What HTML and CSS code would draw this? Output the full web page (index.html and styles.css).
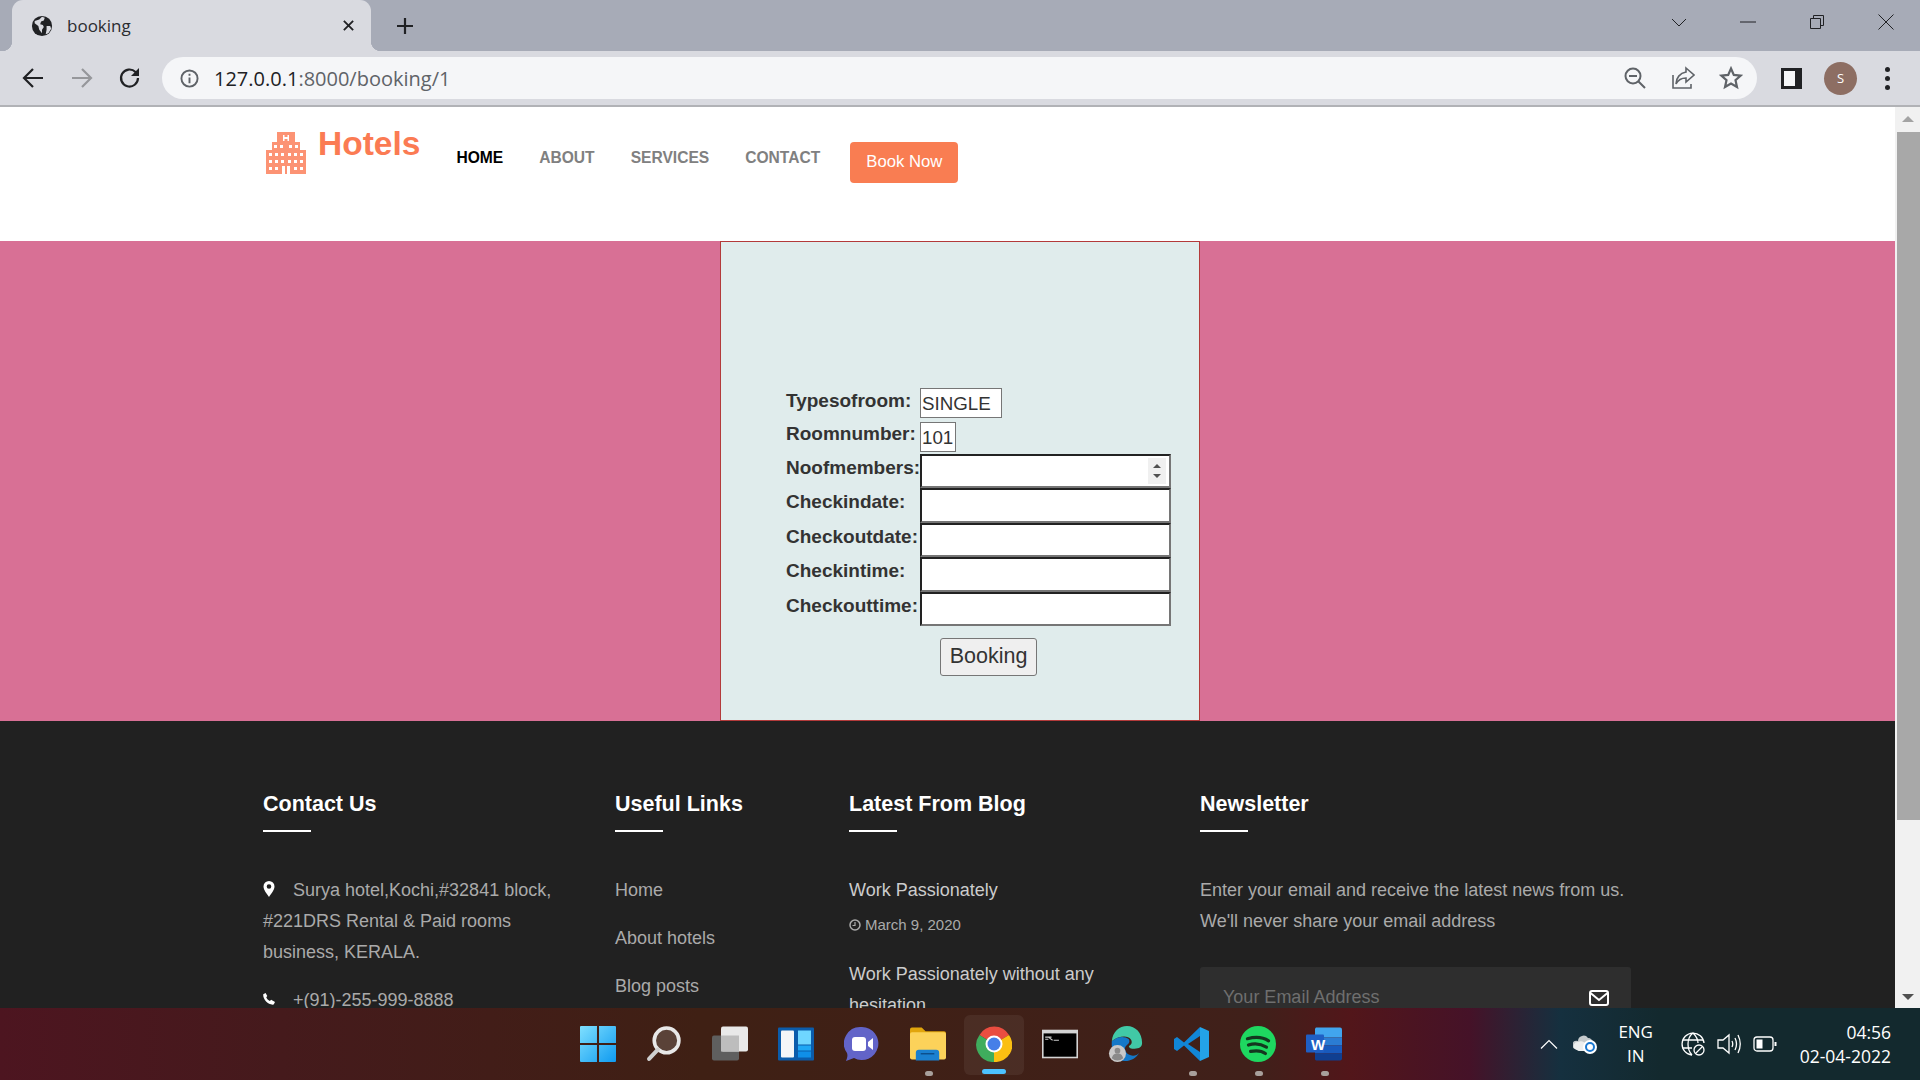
FILE: index.html
```html
<!DOCTYPE html>
<html lang="en">
<head>
  <meta charset="UTF-8">
  <title>booking</title>
  <link rel="stylesheet" href="styles.css">
</head>
<body>
  <!-- browser tab row -->
  <div class="tabstrip">
    <div class="tab">
      <svg class="favicon" viewBox="0 0 24 24"><circle cx="12" cy="12" r="11" fill="#202124"/><path d="M4 6.5 9 5l3-3 3 1-1 3-3 1-1 3 3 1 1 2-2 3v4l-3-4-1-4-4-3zM17 12h4l1 3-3 5-3 1 1-5z" fill="#d9dae0"/></svg>
      <span class="tab-title">booking</span>
      <svg class="tab-close" viewBox="0 0 14 14"><path d="M2 2l10 10M12 2 2 12" stroke="#202124" stroke-width="2"/></svg>
    </div>
    <svg class="new-tab" viewBox="0 0 18 18"><path d="M9 1v16M1 9h16" stroke="#202124" stroke-width="2.2"/></svg>
    <div class="win-controls">
      <svg viewBox="0 0 16 16"><path d="M1 5l7 7 7-7" fill="none" stroke="#202124"/></svg>
      <svg viewBox="0 0 16 16"><path d="M0 8h16" stroke="#202124"/></svg>
      <svg viewBox="0 0 16 16"><path d="M1.5 4.5h10v10h-10zM4.500 4.500v-3h10v10h-3" fill="none" stroke="#202124"/></svg>
      <svg viewBox="0 0 16 16"><path d="M.5.5l15 15M15.500.5l-15 15" stroke="#202124"/></svg>
    </div>
  </div>

  <!-- address bar -->
  <div class="toolbar">
    <svg class="tool-btn" viewBox="0 0 24 24"><path d="M22 12H4M12 3l-9 9 9 9" fill="none" stroke="#202124" stroke-width="2.200"/></svg>
    <svg class="tool-btn" viewBox="0 0 24 24"><path d="M2 12h18M12 3l9 9-9 9" fill="none" stroke="#96979b" stroke-width="2.200"/></svg>
    <svg class="tool-btn" viewBox="0 0 24 24"><path d="M20 12a8.500 8.500 0 1 1-2.500-6L20 8.500" fill="none" stroke="#202124" stroke-width="2.200"/><path d="M21 2v8h-8z" fill="#202124"/></svg>
    <div class="omnibox">
      <svg class="info-icon" viewBox="0 0 20 20"><circle cx="10" cy="10" r="8.500" fill="none" stroke="#5f6368" stroke-width="2"/><path d="M9 9h2v6H9zM9 5h2v2H9z" fill="#5f6368"/></svg>
      <span class="url"><span class="url-host">127.0.0.1</span>:8000/booking/1</span>
      <div class="omni-icons">
        <svg viewBox="0 0 24 24"><circle cx="10" cy="10" r="7.500" fill="none" stroke="#5f6368" stroke-width="2"/><path d="M6 10h8M15.500 15.500l6.500 6.500" stroke="#5f6368" stroke-width="2"/></svg>
        <svg viewBox="0 0 24 24"><path d="M2 9v13h18v-4" fill="none" stroke="#5f6368" stroke-width="1.600"/><path d="M15 2l8 7-8 7v-4c-5 0-8 2-10 6 0-6 4-11 10-12z" fill="none" stroke="#5f6368" stroke-width="1.600"/></svg>
        <svg viewBox="0 0 24 24"><path d="M12 2.500l2.800 6.400 6.900.7-5.200 4.600 1.500 6.800-6-3.500-6 3.500 1.500-6.800-5.200-4.600 6.900-.7z" fill="none" stroke="#5f6368" stroke-width="2.200"/></svg>
      </div>
    </div>
    <svg class="side-panel" viewBox="0 0 21 21"><rect width="21" height="21" fill="#202124"/><rect x="3" y="3" width="11" height="15" fill="#f5f6f8"/></svg>
    <div class="avatar">S</div>
    <div class="menu-dots"><i></i><i></i><i></i></div>
  </div>

  <div class="viewport">
    <div class="page">
      <header class="site-header">
        <svg class="logo-icon" viewBox="0 0 40 42">
          <path d="M0 18h6v-8h5V0h18v10h5v8h6v24H0z" fill="#fc9374"/>
          <path d="M17 3h1.500v2h3V3H23v6h-1.500V7h-3v2H17zM8 13h3v3H8zM14 13h3v3h-3zM23 13h3v3h-3zM29 13h3v3h-3zM3 21h3v3H3zM9 21h3v3H9zM15 21h3v3h-3zM22 21h3v3h-3zM28 21h3v3h-3zM34 21h3v3h-3zM3 28h3v3H3zM9 28h3v3H9zM15 28h3v3h-3zM22 28h3v3h-3zM28 28h3v3h-3zM34 28h3v3h-3zM3 35h3v3H3zM9 35h3v3H9zM34 35h3v3h-3zM28 35h3v3h-3zM16 34h3v8h-3zM21 34h3v8h-3z" fill="#fff"/>
        </svg>
        <a class="logo-text">Hotels</a>
        <nav class="main-nav">
          <a class="nav-link active">HOME</a>
          <a class="nav-link">ABOUT</a>
          <a class="nav-link">SERVICES</a>
          <a class="nav-link">CONTACT</a>
        </nav>
        <a class="book-btn">Book Now</a>
      </header>

      <section class="booking-band">
        <form class="booking-form">
          <div class="form-row row-type">
            <label>Typesofroom:</label>
            <span class="value-box">SINGLE</span>
          </div>
          <div class="form-row row-number">
            <label>Roomnumber:</label>
            <span class="value-box value-small">101</span>
          </div>
          <div class="form-row">
            <label>Noofmembers:</label>
            <div class="spin-wrap">
              <input type="number">
              <div class="spin-box"><i class="spin-up"></i><i class="spin-down"></i></div>
            </div>
          </div>
          <div class="form-row"><label>Checkindate:</label><input type="text"></div>
          <div class="form-row"><label>Checkoutdate:</label><input type="text"></div>
          <div class="form-row"><label>Checkintime:</label><input type="text"></div>
          <div class="form-row"><label>Checkouttime:</label><input type="text"></div>
          <button type="button" class="submit-btn">Booking</button>
        </form>
      </section>

      <footer class="site-footer">
        <div class="foot-col">
          <h3>Contact Us</h3>
          <p class="foot-text"><svg class="foot-icon pin" viewBox="0 0 12 16"><path fill-rule="evenodd" d="M6 0a5.500 5.500 0 0 1 5.500 5.500C11.500 9 8 13 6 16 4 13 .5 9 .5 5.500A5.500 5.500 0 0 1 6 0zm0 3.200a2.300 2.300 0 1 0 0 4.600 2.300 2.300 0 0 0 0-4.600z" fill="#fff"/></svg>Surya hotel,Kochi,#32841 block, #221DRS Rental &amp; Paid rooms business, KERALA.</p>
          <p class="foot-text phone"><svg class="foot-icon" viewBox="0 0 14 14"><path d="M3 0 5 3.500 3.800 5c.8 2 2.200 3.400 4.200 4.200L9.500 8 14 10.500 12.500 13.500C6 14.500-.5 7 .3 1.500z" fill="#fff"/></svg>+(91)-255-999-8888</p>
        </div>
        <div class="foot-col">
          <h3>Useful Links</h3>
          <a class="foot-link">Home</a>
          <a class="foot-link">About hotels</a>
          <a class="foot-link">Blog posts</a>
        </div>
        <div class="foot-col blog-col">
          <h3>Latest From Blog</h3>
          <a class="post-title">Work Passionately</a>
          <div class="post-date"><svg viewBox="0 0 12 12"><circle cx="6" cy="6" r="5" fill="none" stroke="#aaa" stroke-width="1.500"/><path d="M6 3v3.500H3.500" fill="none" stroke="#aaa" stroke-width="1.200"/></svg>March 9, 2020</div>
          <a class="post-title">Work Passionately without any hesitation</a>
        </div>
        <div class="foot-col">
          <h3>Newsletter</h3>
          <p class="foot-text">Enter your email and receive the latest news from us. We'll never share your email address</p>
          <div class="news-box">
            <span>Your Email Address</span>
            <svg viewBox="0 0 20 16"><rect x="1" y="1" width="18" height="14" rx="2" fill="none" stroke="#fff" stroke-width="2"/><path d="M1.500 3 10 10l8.500-7" fill="none" stroke="#fff" stroke-width="2"/></svg>
          </div>
        </div>
      </footer>
    </div>

    <div class="scrollbar">
      <div class="sb-arrow up"></div>
      <div class="sb-thumb"></div>
      <div class="sb-arrow down"></div>
    </div>
  </div>

  <!-- windows taskbar -->
  <div class="taskbar">
    <div class="task-apps">
      <div class="task-app">
        <svg viewBox="0 0 35 35"><defs><linearGradient id="winblue" x1="0" y1="0" x2="1" y2="1"><stop offset="0" stop-color="#7fe0ff"/><stop offset="1" stop-color="#0f9af0"/></linearGradient></defs><path d="M1 0h15.500v16.500H0V1a1 1 0 0 1 1-1zM18.500 0H34a1 1 0 0 1 1 1v15.500H18.500zM0 18.500h16.500V35H1a1 1 0 0 1-1-1zM18.500 18.500H35V34a1 1 0 0 1-1 1H18.500z" fill="url(#winblue)"/></svg>
      </div>
      <div class="task-app">
        <svg viewBox="0 0 35 35"><circle cx="20" cy="14" r="12" fill="#5a4238" stroke="#e8e8e8" stroke-width="3.500"/><path d="M11.500 23 3 32" stroke="#d0d0d0" stroke-width="4" stroke-linecap="round"/></svg>
      </div>
      <div class="task-app">
        <svg viewBox="0 0 36 35"><rect x="0" y="9" width="27" height="25" rx="2" fill="#5f5f5f"/><rect x="9" y="0" width="27" height="25" rx="2" fill="#e9e9e9"/><rect x="9" y="9" width="18" height="16" fill="#bdbdbd"/></svg>
      </div>
      <div class="task-app">
        <svg viewBox="0 0 36 33"><rect width="36" height="33" rx="1" fill="#0b5cab"/><rect x="3" y="3" width="13" height="27" rx="1" fill="#f4f6f8"/><rect x="20" y="3" width="13" height="14" fill="#6fd6ff"/><rect x="20" y="18" width="13" height="5" fill="#1ea7f5"/><rect x="20" y="24" width="13" height="6" fill="#0f8fe8"/></svg>
      </div>
      <div class="task-app">
        <svg viewBox="0 0 36 36"><path d="M18 1a16.500 16.500 0 1 1-8 31l-8 3c1-3 2-5 1-8A16.500 16.500 0 0 1 18 1z" fill="#6264c8"/><rect x="8" y="11" width="14" height="14" rx="3" fill="#fff"/><path d="M24 16l5-4v12l-5-4z" fill="#fff"/></svg>
      </div>
      <div class="task-app running">
        <svg viewBox="0 0 37 34"><path d="M0 2a2 2 0 0 1 2-2h10l4 4h19a2 2 0 0 1 2 2v5H0z" fill="#e2a50c"/><rect y="5" width="37" height="28" rx="2" fill="#fcd25a"/><path d="M6 33v-8a3 3 0 0 1 3-3h18a3 3 0 0 1 3 3v8z" fill="#1a80d0" transform="translate(0 1)"/><path d="M11 27h14" stroke="#0c4f8c" stroke-width="1.500"/></svg>
      </div>
      <div class="task-app chrome-app">
        <svg viewBox="0 0 36 36"><path d="M18 18 3.500 9A17 17 0 0 1 33 9z" fill="#e94235"/><path d="M18 18 33 9a17 17 0 0 1-15 27z" fill="#fbbc04"/><path d="M18 18v18A17 17 0 0 1 3.500 9z" fill="#34a853"/><circle cx="18" cy="18" r="8.500" fill="#fff"/><circle cx="18" cy="18" r="6.500" fill="#3b78e7"/></svg>
      </div>
      <div class="task-app">
        <svg viewBox="0 0 34 27"><rect width="34" height="27" fill="#d4d4d4"/><rect x="1.500" y="3.500" width="31" height="22" fill="#000"/><path d="M3 7h6M3 9h3M6 7l4 3M11 10h5" stroke="#ccc" stroke-width="1"/></svg>
      </div>
      <div class="task-app">
        <svg viewBox="0 0 36 38"><path d="M3 16C4 6 11 0 19 0c9 0 16 7 16 18 0 4-3 6-8 6-4 0-6-1-6-3 3-1 4-4 2-7-3-4-12-4-20 2z" fill="#41c9a6"/><path d="M3 16c6-5 13-6 18-2 1 2 1 4-2 6-4 3-2 9 4 11 3 1 7 0 9-3-3 6-9 9-15 9C8 37 2 27 3 16z" fill="#1478c8"/><circle cx="9" cy="29" r="9" fill="#c9c9c9"/><circle cx="9" cy="26" r="3" fill="#8a8a8a"/><path d="M3 34c1-4 3-5 6-5s5 1 6 5a9 9 0 0 1-12 0z" fill="#8a8a8a"/></svg>
      </div>
      <div class="task-app running">
        <svg viewBox="0 0 36 36"><path d="M26 1l9 4v26l-9 4z" fill="#23a3e8"/><path d="M26 1 10 16.500 3 11l-3 2v10l3 2 7-5.500L26 35v-9L14 18l12-8z" fill="#1186d6"/></svg>
      </div>
      <div class="task-app running">
        <svg viewBox="0 0 34 34"><circle cx="17" cy="17" r="17" fill="#1ed760"/><path d="M7 12c7-2 14-2 20 2M8 18c6-2 12-1 17 2M10 24c5-1 10-1 14 2" fill="none" stroke="#14361f" stroke-width="3" stroke-linecap="round"/></svg>
      </div>
      <div class="task-app running word-app">
        <svg viewBox="0 0 36 33"><path d="M10 0h24a2 2 0 0 1 2 2v8H9V1z" fill="#41a5ee"/><rect x="9" y="10" width="27" height="8" fill="#2b7cd3"/><rect x="9" y="18" width="27" height="8" fill="#185abd"/><path d="M9 26h27v5a2 2 0 0 1-2 2H10l-1-1z" fill="#103f91"/><rect y="7" width="18" height="18" rx="1" fill="#1f5fc4"/></svg>
        <span class="word-letter">W</span>
      </div>
    </div>
    <div class="tray">
      <svg class="tray-caret" viewBox="0 0 18 10"><path d="M1 9.500l8-8 8 8" fill="none" stroke="#fff" stroke-width="1.200"/></svg>
      <svg class="tray-cloud" viewBox="0 0 24 20"><path d="M2 15a4 4 0 0 1 3-8 5.500 5.500 0 0 1 10-3 5 5 0 0 1 5 5l-7 8H6z" fill="#c5cacc"/><path d="M2 15a4 4 0 0 1 3-7 6 6 0 0 1 8 2l2 7H6z" fill="#eceeee"/><circle cx="17" cy="13" r="7" fill="#fff"/><circle cx="17" cy="13" r="4" fill="none" stroke="#1a78d0" stroke-width="2"/></svg>
      <div class="tray-lang">ENG<br>IN</div>
      <svg class="tray-icon" viewBox="0 0 24 24"><g fill="none" stroke="#fff" stroke-width="1.300"><path d="M11 23A11 11 0 1 1 23 11"/><path d="M12 1C8 4 7 8 7 12s1 8 4 11M12 1c3 3 5 6 5 10"/><path d="M2 8h20M1.500 16H11"/><circle cx="18" cy="18" r="5"/><path d="M15 21l6-6"/></g></svg>
      <svg class="tray-icon" viewBox="0 0 24 24"><g fill="none" stroke="#fff" stroke-width="1.300"><path d="M1 8h5l6-5v18l-6-5H1z"/><path d="M15 9c1 2 1 4 0 6M18 6c2 4 2 8 0 12M21 3c3 6 3 12 0 18"/></g></svg>
      <svg class="tray-icon" viewBox="0 0 24 24"><rect x="1" y="5" width="19" height="14" rx="3" fill="none" stroke="#fff" stroke-width="1.300"/><rect x="3.500" y="7.500" width="6" height="9" fill="#fff"/><path d="M21.500 10h2v4h-2z" fill="#fff"/></svg>
      <div class="tray-clock"><div>04:56</div><div>02-04-2022</div></div>
    </div>
  </div>
</body>
</html>
```

FILE: styles.css
```css
html, body {
  margin: 0;
  padding: 0;
  height: 100%;
  overflow: hidden;
}

body {
  display: flex;
  flex-direction: column;
  width: 1920px;
  height: 1080px;
  font-family: "Liberation Sans", Arial, sans-serif;
}

a { text-decoration: none; }

/* browser chrome */
.tabstrip {
  display: flex;
  align-items: flex-start;
  flex: 0 0 51px;
  background: #a7abb7;
}

.tab {
  position: relative;
  display: flex;
  align-items: center;
  width: 359px;
  height: 51px;
  margin-left: 12px;
  padding: 0 16px 0 19px;
  box-sizing: border-box;
  background: #d9dae0;
  border-radius: 11px 11px 0 0;
}

.tab::before,
.tab::after {
  content: "";
  position: absolute;
  bottom: 0;
  width: 10px;
  height: 10px;
}

.tab::before {
  left: -10px;
  background: radial-gradient(circle at 0 0, #a7abb7 10px, #d9dae0 10.5px);
}

.tab::after {
  right: -10px;
  background: radial-gradient(circle at 100% 0, #a7abb7 10px, #d9dae0 10.5px);
}

.favicon { width: 22px; height: 22px; }

.tab-title {
  flex: 1;
  margin-left: 14px;
  font: 17px "Open Sans", sans-serif;
  color: #2b2c30;
}

.tab-close { width: 13px; height: 13px; }

.new-tab {
  width: 18px;
  height: 18px;
  margin: 17px 0 0 25px;
}

.win-controls {
  display: flex;
  gap: 53px;
  margin: 14px 26px 0 auto;
}

.win-controls svg { width: 16px; height: 16px; }

.toolbar {
  display: flex;
  align-items: center;
  flex: 0 0 56px;
  box-sizing: border-box;
  padding-left: 21px;
  background: #d9dae0;
  border-bottom: 2px solid #b1b2b6;
}

.tool-btn {
  width: 24px;
  height: 24px;
  margin-right: 24.500px;
}

.omnibox {
  display: flex;
  align-items: center;
  width: 1595px;
  height: 42px;
  margin-left: -4.500px;
  box-sizing: border-box;
  padding: 0 14px 0 18px;
  background: #f5f6f8;
  border-radius: 21px;
}

.info-icon { width: 19px; height: 19px; }

.url {
  margin-left: 15px;
  font: 20px "Open Sans", sans-serif;
  color: #5f6368;
}

.url-host { color: #202124; }

.omni-icons {
  display: flex;
  gap: 24px;
  margin-left: auto;
}

.omni-icons svg { width: 24px; height: 24px; }

.side-panel {
  width: 21px;
  height: 21px;
  margin-left: 24px;
}

.avatar {
  width: 33px;
  height: 33px;
  margin-left: 22px;
  border-radius: 50%;
  background: #8d6e63;
  color: #fff;
  font: 13px/33px "Open Sans", sans-serif;
  text-align: center;
}

.menu-dots {
  display: flex;
  flex-direction: column;
  gap: 4px;
  margin-left: 28px;
}

.menu-dots i {
  width: 5px;
  height: 5px;
  border-radius: 50%;
  background: #202124;
}

/* page area */
.viewport {
  display: flex;
  flex: 0 0 901px;
  height: 901px;
  overflow: hidden;
}

.page {
  width: 1895px;
  overflow: hidden;
  background: #fff;
}

.scrollbar {
  display: flex;
  flex-direction: column;
  width: 25px;
  background: #f1f1f1;
}

.sb-arrow {
  flex: 0 0 25px;
  position: relative;
}

.sb-arrow::after {
  content: "";
  position: absolute;
  left: 7px;
  top: 9px;
  border-left: 6px solid transparent;
  border-right: 6px solid transparent;
}

.up::after { border-bottom: 6px solid #a3a3a3; }
.down::after { top: 11px; border-top: 6px solid #505050; }

.sb-thumb {
  flex: 0 0 688px;
  background: #a8a8a8;
  margin: 0 0 auto 2px;
}

/* site header */
.site-header {
  display: flex;
  align-items: flex-start;
  height: 134px;
  padding-left: 266px;
}

.logo-icon {
  width: 40px;
  height: 42px;
  margin-top: 25px;
}

.logo-text {
  margin: 18px 0 0 12px;
  font-size: 33.5px;
  line-height: 38px;
  font-weight: bold;
  color: #fb7b53;
}

.main-nav {
  display: flex;
  gap: 36px;
  margin: 42px 0 0 36px;
}

.nav-link {
  font-size: 15.6px;
  line-height: 18px;
  font-weight: bold;
  color: #808080;
}

.nav-link.active { color: #000; }

.book-btn {
  margin: 35px 0 0 30px;
  width: 108px;
  padding-bottom: 1px;
  font-size: 16.700px;
  line-height: 40px;
  text-align: center;
  color: #fff;
  background: #f97d52;
  border-radius: 4px;
}

/* booking form */
.booking-band {
  display: flex;
  justify-content: center;
  height: 480px;
  padding-left: 25px;
  background: #d87095;
}

.booking-form {
  width: 480px;
  box-sizing: border-box;
  padding: 146px 0 0 65px;
  background: #e0ecec;
  border: 1px solid #b33a3a;
  color: #333;
}

.form-row {
  display: flex;
  align-items: flex-start;
  height: 34.400px;
}

.row-type { height: 34px; }
.row-number { height: 32px; }

.form-row label {
  flex: 0 0 134px;
  margin-top: 3px;
  font-size: 19px;
  line-height: 22px;
  font-weight: bold;
}

.row-type label { margin-top: 2px; }
.row-number label { margin-top: 1px; }

.value-box {
  box-sizing: border-box;
  height: 30px;
  width: 82px;
  padding-left: 1px;
  background: #fff;
  border: 1px solid #767676;
  font-size: 18.750px;
  line-height: 29px;
}

.value-small { width: 36px; }

.form-row input {
  box-sizing: border-box;
  width: 251px;
  height: 34.400px;
  margin: 0;
  padding: 0 1px;
  background: #fff;
  border: 2px solid;
  border-color: #222 #767676 #767676 #222;
  font-size: 18.750px;
  appearance: textfield;
}

.spin-wrap {
  position: relative;
  height: 34.400px;
}

.spin-box {
  position: absolute;
  top: 4px;
  right: 5px;
  display: flex;
  flex-direction: column;
  align-items: center;
  justify-content: center;
  gap: 6px;
  width: 18px;
  height: 26px;
  background: #f0f0f0;
}

.spin-box i {
  border-left: 4px solid transparent;
  border-right: 4px solid transparent;
}

.spin-up { border-bottom: 4px solid #505050; }
.spin-down { border-top: 4px solid #505050; }

.submit-btn {
  display: block;
  width: 97px;
  height: 38px;
  margin: 12px 0 0 154px;
  padding: 0;
  background: #efefef;
  border: 1px solid #767676;
  border-radius: 3px;
  font-family: "Liberation Sans", Arial, sans-serif;
  font-size: 21.500px;
  color: #333;
}

/* footer */
.site-footer {
  display: grid;
  grid-template-columns: 352px 234px 351px 431px;
  height: 400px;
  padding: 69px 0 0 263px;
  background: #212121;
  color: #aaa;
  font-size: 18px;
  line-height: 31px;
}

.foot-col { min-width: 0; }

.foot-col h3 {
  position: relative;
  margin: 0 0 42.500px;
  padding-bottom: 14px;
  font-size: 21.500px;
  line-height: 28px;
  color: #fff;
}

.foot-col h3::after {
  content: "";
  position: absolute;
  left: 0;
  bottom: 0;
  width: 48px;
  height: 2px;
  background: #fff;
}

.foot-text {
  margin: 0;
  width: 300px;
}

.foot-col:last-child .foot-text { width: 431px; }

.phone { margin-top: 17px; }

.foot-icon {
  width: 12px;
  height: 16px;
  margin-right: 18px;
  vertical-align: -1px;
}

.foot-link {
  display: block;
  margin-bottom: 17px;
  color: #aaa;
}

.post-title {
  display: block;
  width: 270px;
  line-height: 31px;
  color: #ccc;
}

.post-date {
  margin: 3px 0 19px;
  font-size: 15px;
  line-height: 31px;
}

.post-date svg {
  width: 12px;
  height: 12px;
  margin-right: 4px;
  vertical-align: -1px;
}

.news-box {
  display: flex;
  align-items: center;
  justify-content: space-between;
  height: 62px;
  margin-top: 30px;
  padding: 0 22px 0 23px;
  background: #2e2e2e;
  border-radius: 3px;
  color: #6f6f6f;
}

.news-box svg { width: 20px; height: 16px; }

/* taskbar */
.taskbar {
  display: flex;
  align-items: stretch;
  flex: 0 0 72px;
  background: linear-gradient(90deg, #4d1520 0, #451a1c 280px, #3f2014 700px, #40201a 1260px, #52161a 1350px, #451228 1470px, #15303f 1560px, #13292e 1660px);
}

.task-apps {
  display: flex;
  margin-left: 565px;
}

.task-app {
  position: relative;
  display: flex;
  align-items: center;
  justify-content: center;
  width: 66px;
}

.task-app svg {
  width: 36px;
  height: 36px;
}

.running::after {
  content: "";
  position: absolute;
  bottom: 4px;
  left: 30px;
  width: 8px;
  height: 5px;
  border-radius: 3px;
  background: #a8a09c;
}

.chrome-app::before {
  content: "";
  position: absolute;
  top: 7px;
  left: 3px;
  width: 60px;
  height: 60px;
  border-radius: 6px;
  background: rgba(255, 255, 255, .06);
}

.chrome-app::after {
  content: "";
  position: absolute;
  bottom: 6px;
  left: 21px;
  width: 24px;
  height: 5px;
  border-radius: 3px;
  background: #4cc2ff;
}

.word-letter {
  position: absolute;
  left: 20px;
  top: 28px;
  font-size: 15px;
  font-weight: bold;
  color: #fff;
}

.tray {
  display: flex;
  align-items: center;
  margin-left: auto;
  padding-right: 29px;
  color: #fff;
  font: 17.500px/24px "Open Sans", sans-serif;
}

.tray-caret { width: 18px; height: 10px; margin-right: 15px; }
.tray-cloud { width: 24px; height: 20px; }

.tray-lang {
  width: 40px;
  margin: 0 25px 0 19px;
  font-size: 17px;
  text-align: center;
}

.tray-icon {
  width: 24px;
  height: 24px;
  margin-right: 12px;
}

.tray-clock {
  margin-left: 11px;
  text-align: right;
}
```
